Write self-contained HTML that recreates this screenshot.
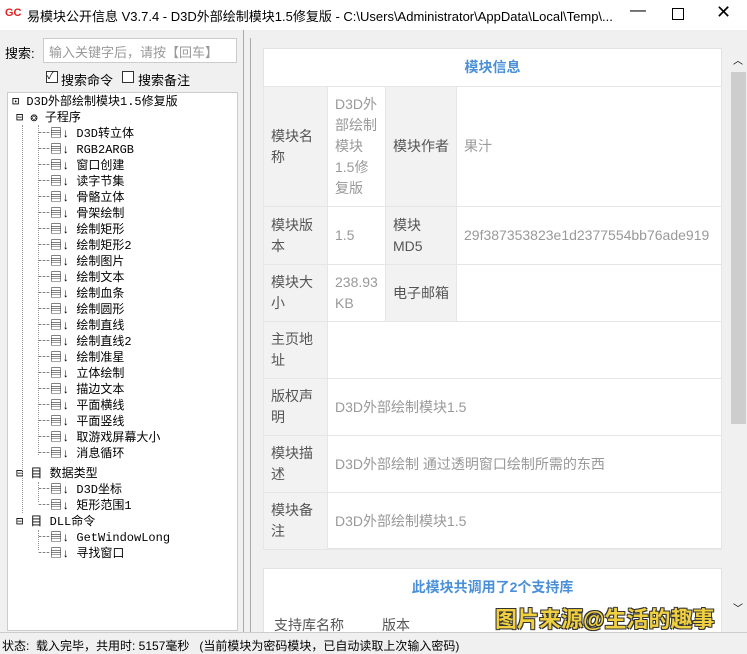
<!DOCTYPE html>
<html><head><meta charset="utf-8"><style>
*{margin:0;padding:0;box-sizing:border-box}
body{width:747px;height:654px;overflow:hidden;background:#f0f0f0;font-family:"Liberation Sans","Noto Sans CJK SC",sans-serif;font-size:12px;color:#000;position:relative}
.abs{position:absolute}
.title{left:0;top:0;width:747px;height:30px;background:#fff}
.tree{left:7px;top:92px;width:231px;height:539px;background:#fff;border:1px solid #ccc;font-family:"Liberation Mono","Noto Sans CJK SC",monospace;font-size:12px}
.ti{position:absolute;height:16px;line-height:16px;white-space:nowrap}
.card{background:#fff;border:1px solid #e3e3e3}
table{table-layout:fixed}
td{border:1px solid #e6e6e6;font-size:14px;color:#999;padding:0 7px;line-height:21px;word-break:break-all}
td.l{background:#f2f2f2;color:#555}
.vd{border-left:1px dotted #999}
</style></head><body>
<div class="abs title">
<span class="abs" style="left:5px;top:7px;color:#d22;font-weight:bold;font-size:11px">GC</span>
<span class="abs" style="left:27px;top:6px;font-size:13px">易模块公开信息 V3.7.4 - D3D外部绘制模块1.5修复版 - C:\Users\Administrator\AppData\Local\Temp\...</span>
<span class="abs" style="left:630px;top:2px;font-size:16px">—</span>
<span class="abs" style="left:672px;top:8px;width:12px;height:12px;border:1px solid #000"></span>
<span class="abs" style="left:716px;top:2px;font-size:18px">✕</span>
</div>
<span class="abs" style="left:5px;top:43px;font-size:13px">搜索:</span>
<div class="abs" style="left:43px;top:38px;width:194px;height:25px;background:#fff;border:1px solid #ccc;color:#999;padding:3px 5px;font-size:13px">输入关键字后，请按【回车】</div>
<span class="abs" style="left:46px;top:71px;width:12px;height:12px;border:1px solid #333;background:#fff;font-size:10px;line-height:10px">✓</span>
<span class="abs" style="left:61px;top:70px;font-size:13px">搜索命令</span>
<span class="abs" style="left:122px;top:71px;width:12px;height:12px;border:1px solid #333;background:#fff"></span>
<span class="abs" style="left:138px;top:70px;font-size:13px">搜索备注</span>
<div class="abs tree">
<div class="ti" style="left:4px;top:1px">⊡ D3D外部绘制模块1.5修复版</div>
<div class="ti" style="left:8px;top:17px">⊟ ❂ 子程序</div>
<div class="ti" style="left:8px;top:373px">⊟ 目 数据类型</div>
<div class="ti" style="left:8px;top:421px">⊟ 目 DLL命令</div>
<div class="abs vd" style="left:14px;top:32px;height:388px"></div>
<div class="abs vd" style="left:30px;top:32px;height:330px"></div>
<div class="abs vd" style="left:30px;top:389px;height:20px"></div>
<div class="abs vd" style="left:30px;top:437px;height:20px"></div>
<div id="items"></div>
</div>
<div class="abs" style="left:243px;top:30px;width:1px;height:602px;background:#aaa"></div>
<div class="abs" style="left:250px;top:38px;width:1px;height:594px;background:#aaa"></div>
<div class="abs" style="left:251px;top:38px;width:496px;height:594px;background:#f0f0f0"></div>
<div class="abs card" style="left:263px;top:48px;width:459px;height:501px">
<div style="height:37px;line-height:37px;text-align:center;color:#4a90d9;font-weight:bold;font-size:14px">模块信息</div>
<table style="border-collapse:collapse;width:459px;margin-left:-1px">
<colgroup><col style="width:64px"><col style="width:58px"><col style="width:71px"><col></colgroup>
<tr style="height:120px"><td class="l">模块名<br>称</td><td>D3D外<br>部绘制<br>模块<br>1.5修<br>复版</td><td class="l">模块作者</td><td>果汁</td></tr>
<tr style="height:58px"><td class="l">模块版<br>本</td><td>1.5</td><td class="l">模块<br>MD5</td><td style="padding-right:0">29f387353823e1d2377554bb76ade919</td></tr>
<tr style="height:57px"><td class="l">模块大<br>小</td><td>238.93 KB</td><td class="l">电子邮箱</td><td></td></tr>
<tr style="height:57px"><td class="l">主页地<br>址</td><td colspan="3"></td></tr>
<tr style="height:57px"><td class="l">版权声<br>明</td><td colspan="3">D3D外部绘制模块1.5</td></tr>
<tr style="height:57px"><td class="l">模块描<br>述</td><td colspan="3">D3D外部绘制 通过透明窗口绘制所需的东西</td></tr>
<tr style="height:57px"><td class="l">模块备<br>注</td><td colspan="3">D3D外部绘制模块1.5</td></tr>
</table></div>
<div class="abs card" style="left:263px;top:568px;width:459px;height:70px">
<div style="height:37px;line-height:37px;text-align:center;color:#4a90d9;font-weight:bold;font-size:14px">此模块共调用了2个支持库</div>
<span class="abs" style="left:10px;top:46px;color:#555;font-size:14px">支持库名称</span>
<span class="abs" style="left:118px;top:46px;color:#555;font-size:14px">版本</span>
</div>
<div class="abs" style="left:730px;top:38px;width:17px;height:594px;background:#f0f0f0"></div>
<div class="abs" style="left:731px;top:72px;width:15px;height:352px;background:#cdcdcd"></div>
<span class="abs" style="left:733px;top:52px;font-size:10px">︿</span>
<span class="abs" style="left:733px;top:600px;font-size:10px">﹀</span>
<span class="abs" style="left:495px;top:602px;font-size:22px;font-weight:bold;color:#f0d040;text-shadow:1px 1px 0 #333,-1px -1px 0 #333,1px -1px 0 #333,-1px 1px 0 #333">图片来源@生活的趣事</span>
<div class="abs" style="left:0;top:632px;width:747px;height:22px;background:#f0f0f0;border-top:1px solid #ccc;padding:4px 2px;font-size:12px;white-space:pre">状态:  载入完毕，共用时: 5157毫秒   (当前模块为密码模块，已自动读取上次输入密码)</div>
<script>
var a=["D3D转立体","RGB2ARGB","窗口创建","读字节集","骨骼立体","骨架绘制","绘制矩形","绘制矩形2","绘制图片","绘制文本","绘制血条","绘制圆形","绘制直线","绘制直线2","绘制准星","立体绘制","描边文本","平面横线","平面竖线","取游戏屏幕大小","消息循环"],h="";
a.forEach(function(t,i){h+='<div class="ti" style="left:30px;top:'+(33+i*16)+'px">┄▤↓ '+t+'</div>'});
["D3D坐标","矩形范围1"].forEach(function(t,i){h+='<div class="ti" style="left:30px;top:'+(389+i*16)+'px">┄▤↓ '+t+'</div>'});
["GetWindowLong","寻找窗口"].forEach(function(t,i){h+='<div class="ti" style="left:30px;top:'+(437+i*16)+'px">┄▤↓ '+t+'</div>'});
document.getElementById("items").innerHTML=h;
</script>
</body></html>
